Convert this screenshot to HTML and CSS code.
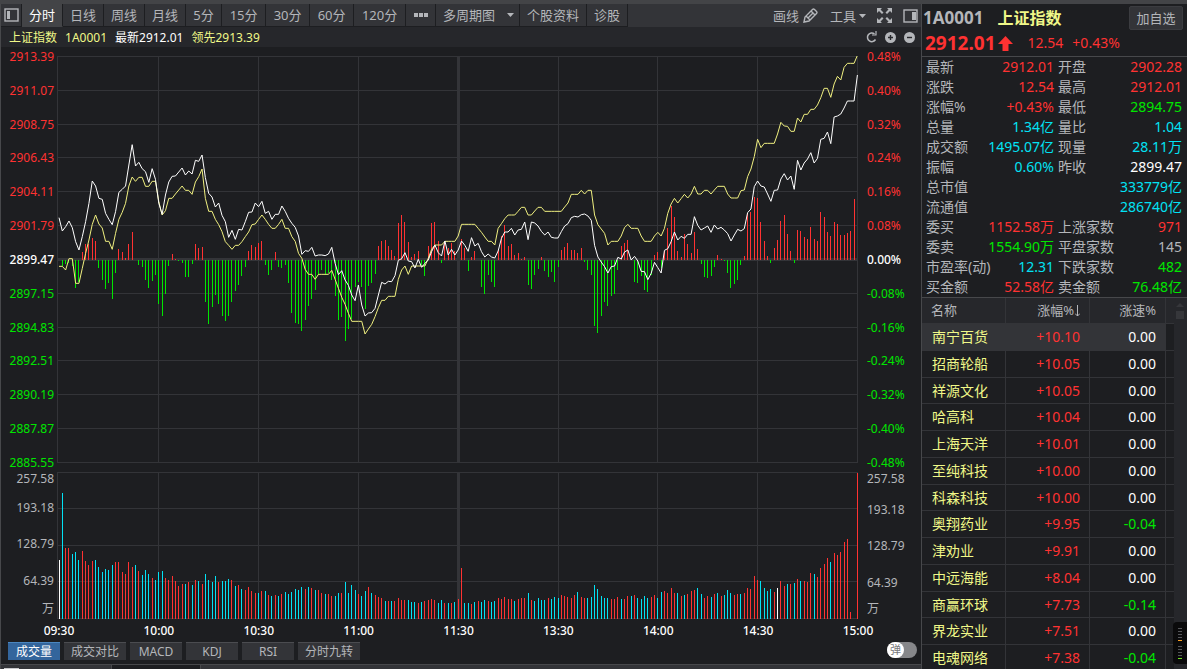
FILE: index.html
```html
<!DOCTYPE html>
<html lang="zh-CN">
<head>
<meta charset="utf-8">
<title>上证指数 1A0001</title>
<link rel="stylesheet" href="styles.css">
</head>
<body>
<div class="app">
  <div class="top-strip"></div>
  <main class="left">
    <nav class="toolbar">
      <button class="tab icon-tab" aria-label="侧栏"><svg width="15" height="14" viewBox="0 0 15 14"><rect x="1" y="1" width="13" height="12" fill="none" stroke="#b4b6ba" stroke-width="1.4"/><rect x="3" y="3" width="3" height="8" fill="#b4b6ba"/></svg></button>
      <button class="tab active">分时</button>
      <button class="tab">日线</button>
      <button class="tab">周线</button>
      <button class="tab">月线</button>
      <button class="tab w-s">5分</button>
      <button class="tab w-m">15分</button>
      <button class="tab w-m">30分</button>
      <button class="tab w-m">60分</button>
      <button class="tab w-l">120分</button>
      <button class="tab dots" aria-label="更多"><svg width="14" height="4" viewBox="0 0 14 4"><path d="M0 0h4v4H0zM5 0h4v4H5zM10 0h4v4h-4z" fill="#b4b6ba"/></svg></button>
      <span class="tab drop"><select aria-label="多周期图"><option>多周期图</option></select><svg width="7" height="4" viewBox="0 0 7 4"><path d="M0 0h7L3.500 4z" fill="#b4b6ba"/></svg></span>
      <button class="tab">个股资料</button>
      <button class="tab">诊股</button>
      <div class="tools">
        <button class="tool">画线<svg width="15" height="15" viewBox="0 0 15 15" fill="none" stroke="#b4b6ba" stroke-width="1.4"><path d="M1 14l1-5 7.500-7.500q1-1 2 0l2 2q1 1 0 2L6 13z"/><path d="M4.500 10.500l6-6M3 8l4 4M8 3l4 4"/></svg></button>
        <span class="tool menu"><select aria-label="工具"><option>工具</option></select><svg width="7" height="4" viewBox="0 0 7 4"><path d="M0 0h7L3.500 4z" fill="#b4b6ba"/></svg></span>
        <button class="tool" aria-label="全屏"><svg width="15" height="15" viewBox="0 0 15 15"><path d="M0 0h5L3.500 1.500 6.500 4.500 5 6 2 3 0 5zM15 0v5L13 3 10 6 8.500 4.500l3-3L10 0zM0 15v-5l2 2 3-3 1.500 1.500-3 3L5 15zM15 15h-5l1.500-1.500-3-3L10 9l3 3 2-2z" fill="#b4b6ba"/></svg></button>
        <button class="tool" aria-label="右侧栏"><svg width="15" height="14" viewBox="0 0 15 14"><rect x="1" y="1" width="13" height="12" fill="none" stroke="#b4b6ba" stroke-width="1.4"/><rect x="9" y="3" width="4" height="8" fill="#b4b6ba"/></svg></button>
      </div>
    </nav>

    <div class="info">
      <span class="yellow">上证指数</span><span class="yellow">1A0001</span><span class="white">最新2912.01</span><span class="yellow">领先2913.39</span>
      <div class="info-icons">
        <button aria-label="刷新"><svg width="11" height="12" viewBox="0 0 11 12"><path d="M8.500 3A4.300 4.300 0 1 0 9.500 8.500" fill="none" stroke="#b4b6ba" stroke-width="1.500"/><path d="M6 4h4V0" fill="none" stroke="#b4b6ba" stroke-width="1.200"/></svg></button>
        <button aria-label="放大"><svg width="11" height="11" viewBox="0 0 11 11"><circle cx="5.500" cy="5.500" r="5.500" fill="#b4b6ba"/><path d="M3 5.500h5M5.500 3v5" stroke="#26272b" stroke-width="1.400"/></svg></button>
        <button aria-label="缩小"><svg width="11" height="11" viewBox="0 0 11 11"><circle cx="5.500" cy="5.500" r="5.500" fill="#b4b6ba"/><path d="M3 5.500h5" stroke="#26272b" stroke-width="1.400"/></svg></button>
      </div>
    </div>

    <section class="charts">
      <div class="plot-row price">
        <div class="axis axis-left">
          <span class="red">2913.39</span><span class="red">2911.07</span><span class="red">2908.75</span><span class="red">2906.43</span><span class="red">2904.11</span><span class="red">2901.79</span><span class="zero">2899.47</span><span class="green">2897.15</span><span class="green">2894.83</span><span class="green">2892.51</span><span class="green">2890.19</span><span class="green">2887.87</span><span class="green">2885.55</span>
        </div>
        <div class="plot"><svg id="price" viewBox="0 0 2403 1221" preserveAspectRatio="none" role="img" aria-label="分时走势"></svg></div>
        <div class="axis axis-right">
          <span class="red">0.48%</span><span class="red">0.40%</span><span class="red">0.32%</span><span class="red">0.24%</span><span class="red">0.16%</span><span class="red">0.08%</span><span class="zero">0.00%</span><span class="green">-0.08%</span><span class="green">-0.16%</span><span class="green">-0.24%</span><span class="green">-0.32%</span><span class="green">-0.40%</span><span class="green">-0.48%</span>
        </div>
      </div>
      <div class="plot-row volume">
        <div class="vol-axis axis-left"><span>257.58</span><span>193.18</span><span>128.79</span><span>64.39</span><span>万</span></div>
        <div class="plot"><svg id="volume" viewBox="0 0 2403 441" preserveAspectRatio="none" role="img" aria-label="成交量"></svg></div>
        <div class="vol-axis axis-right"><span>257.58</span><span>193.18</span><span>128.79</span><span>64.39</span><span>万</span></div>
      </div>
      <div class="times"><span>09:30</span><span>10:00</span><span>10:30</span><span>11:00</span><span>11:30</span><span>13:30</span><span>14:00</span><span>14:30</span><span>15:00</span></div>
    </section>

    <div class="indicators">
      <button class="ind on">成交量</button><button class="ind wide">成交对比</button><button class="ind">MACD</button><button class="ind">KDJ</button><button class="ind">RSI</button><button class="ind wide">分时九转</button>
      <label class="switch"><input type="checkbox"><span class="knob">弹</span></label>
    </div>
    <div class="bottom-strip"><i class="stub"></i><i class="slot"></i></div>
  </main>

  <aside class="right">
    <header class="quote">
      <div class="name-row"><span class="code">1A0001</span><h1>上证指数</h1><button class="add">加自选</button></div>
      <div class="last-row"><strong>2912.01</strong><svg width="15" height="15" viewBox="0 0 15 15"><path d="M7.500 0L15 8h-4.500v7h-6V8H0z" fill="#ff3232"/></svg><span class="chg">12.54</span><span>+0.43%</span></div>
    </header>
    <dl class="stats">
      <dt>最新</dt><dd class="red">2912.01</dd><dt class="second">开盘</dt><dd class="red">2902.28</dd>
      <dt>涨跌</dt><dd class="red">12.54</dd><dt class="second">最高</dt><dd class="red">2912.01</dd>
      <dt>涨幅%</dt><dd class="red">+0.43%</dd><dt class="second">最低</dt><dd class="green">2894.75</dd>
      <dt>总量</dt><dd class="cyan">1.34亿</dd><dt class="second">量比</dt><dd class="cyan">1.04</dd>
      <dt>成交额</dt><dd class="cyan">1495.07亿</dd><dt class="second">现量</dt><dd class="cyan">28.11万</dd>
      <dt>振幅</dt><dd class="cyan">0.60%</dd><dt class="second">昨收</dt><dd class="white">2899.47</dd>
      <dt>总市值</dt><dd class="cyan span">333779亿</dd>
      <dt>流通值</dt><dd class="cyan span">286740亿</dd>
      <dt>委买</dt><dd class="red">1152.58万</dd><dt class="second">上涨家数</dt><dd class="red">971</dd>
      <dt>委卖</dt><dd class="green">1554.90万</dd><dt class="second">平盘家数</dt><dd>145</dd>
      <dt>市盈率(动)</dt><dd class="cyan">12.31</dd><dt class="second">下跌家数</dt><dd class="green">482</dd>
      <dt>买金额</dt><dd class="red">52.58亿</dd><dt class="second">卖金额</dt><dd class="green">76.48亿</dd>
    </dl>
    <div class="list">
      <table>
        <colgroup><col class="c-name"><col class="c-pct"><col class="c-speed"><col></colgroup>
        <thead><tr><th>名称</th><th>涨幅%<svg class="sort" width="5" height="12" viewBox="0 0 5 12"><path d="M2.500 0v11M0 8.500l2.500 2.500L5 8.500" fill="none" stroke="#b4b6ba"/></svg></th><th>涨速%</th><th></th></tr></thead>
        <tbody>
          <tr class="selected"><td>南宁百货</td><td>+10.10</td><td>0.00</td><td></td></tr>
          <tr><td>招商轮船</td><td>+10.05</td><td>0.00</td><td></td></tr>
          <tr><td>祥源文化</td><td>+10.05</td><td>0.00</td><td></td></tr>
          <tr><td>哈高科</td><td>+10.04</td><td>0.00</td><td></td></tr>
          <tr><td>上海天洋</td><td>+10.01</td><td>0.00</td><td></td></tr>
          <tr><td>至纯科技</td><td>+10.00</td><td>0.00</td><td></td></tr>
          <tr><td>科森科技</td><td>+10.00</td><td>0.00</td><td></td></tr>
          <tr><td>奥翔药业</td><td>+9.95</td><td class="green">-0.04</td><td></td></tr>
          <tr><td>津劝业</td><td>+9.91</td><td>0.00</td><td></td></tr>
          <tr><td>中远海能</td><td>+8.04</td><td>0.00</td><td></td></tr>
          <tr><td>商赢环球</td><td>+7.73</td><td class="green">-0.14</td><td></td></tr>
          <tr><td>界龙实业</td><td>+7.51</td><td>0.00</td><td></td></tr>
          <tr><td>电魂网络</td><td>+7.38</td><td class="green">-0.04</td><td></td></tr>
        </tbody>
      </table>
      <div class="scroll"><svg width="8" height="4" viewBox="0 0 8 4"><path d="M4 0l4 4H0z" fill="#36373b"/></svg><i class="thumb"></i></div>
      <div class="meter"><svg width="14" height="42" viewBox="0 0 14 42"><path d="M5 6.500h4M5 9.500h4M5 12.500h4M5 15.500h4M5 24.500h4M5 27.500h4M5 30.500h4M5 33.500h4" stroke="#55565a"/><path d="M5 18.500h4" stroke="#ffa020"/><path d="M5 36.500h4" stroke="#70e020"/></svg></div>
    </div>
  </aside>
</div>
<script src="chart.js"></script>
</body>
</html>
```
FILE: styles.css
```css
* { box-sizing: border-box; }
body {
  margin: 0;
  background: #1d1e21;
  color: #b4b6ba;
  font: 14px/20px "Noto Sans", "Noto Sans CJK SC", sans-serif;
}
button, select {
  margin: 0;
  padding: 0;
  border: 0;
  background: none;
  color: inherit;
  font: inherit;
}
select { appearance: none; }
svg { display: block; flex: none; }

.red { color: #ff3232; }
.green { color: #00e600; }
.cyan { color: #02e2f4; }
.white { color: #fff; }
.yellow { color: #f0f888; }

.app {
  display: grid;
  grid-template-columns: 1fr 266px;
  grid-template-rows: 4px 1fr;
  height: 100vh;
  overflow: hidden;
}
.top-strip { grid-column: 1 / -1; background: #434447; }

.left {
  display: flex;
  flex-direction: column;
  min-width: 0;
  min-height: 0;
  border-left: 1px solid #47484b;
}

.toolbar {
  display: flex;
  height: 23px;
  background: #333438;
  font-size: 13px;
  white-space: nowrap;
}
.tab {
  padding: 0 7px;
  border-right: 1px solid #1d1e21;
  border-bottom: 1px solid #1d1e21;
  line-height: 21px;
}
.tab.active { background: #434447; border-bottom-color: #434447; color: #fff; }
.icon-tab { padding: 0 2px 0 3px; }
.w-s { width: 36px; }
.w-m { width: 44px; }
.w-l { width: 52px; }
.dots { width: 30px; padding: 0 8px; }
.drop { display: flex; align-items: center; gap: 12px; padding: 0 5px 0 7px; }
.drop select { width: 52px; }
.tools { display: flex; gap: 11px; margin-left: auto; padding-right: 3px; }
.tool { display: flex; align-items: center; gap: 4px; }
.tool:first-child { margin-right: 1px; }
.menu { gap: 3px; }
.tool select { width: 26px; }

.info {
  display: flex;
  gap: 8px;
  height: 20px;
  padding: 0 6px 0 8px;
  background: #26272b;
  font-size: 12px;
  line-height: 22px;
}
.info-icons { display: flex; align-items: center; gap: 8px; margin-left: auto; }

.charts {
  display: flex;
  flex: 1;
  flex-direction: column;
  min-height: 0;
  padding-top: 9px;
  font-size: 12px;
}
.plot-row {
  display: grid;
  grid-template-columns: 56px 1fr 63px;
  grid-template-rows: 100%;
  min-height: 0;
}
.price { flex: 407 1 0; margin-bottom: 9px; }
.volume { flex: 147 1 0; }
.plot { min-width: 0; min-height: 0; }
.plot svg { width: 100%; height: 100%; }
.axis {
  display: flex;
  flex-direction: column;
  justify-content: space-between;
  margin: -6px 0 -7px;
  line-height: 14px;
}
.axis-left { padding-right: 3px; text-align: right; }
.axis-right { padding-left: 9px; }
.zero { color: #fff; font-weight: 500; }
.vol-axis {
  display: grid;
  grid-template-rows: 29fr 36fr 37fr 28fr 17fr;
  line-height: 14px;
}
.vol-axis.axis-right { grid-template-rows: 31fr 36fr 37fr 26fr 17fr; }
.times {
  display: flex;
  justify-content: space-between;
  height: 23px;
  margin: 0 43px 0 38px;
  color: #fff;
  font-weight: 500;
  line-height: 24px;
}
.times span { width: 40px; text-align: center; }

.plot line, .plot polyline { fill: none; stroke-width: 1px; vector-effect: non-scaling-stroke; }
.plot line { shape-rendering: crispEdges; }
.grid { stroke: #333438; }
.plot .thick { stroke-width: 3px; }
.up { stroke: #ff3232; }
.down { stroke: #00e600; }
.fall { stroke: #02e2f4; }
.flat, .index { stroke: #fff; }
.lead { stroke: #f0f080; }

.indicators {
  display: flex;
  gap: 4px;
  height: 18px;
  margin-bottom: 4px;
  padding: 0 4px 0 7px;
  font-size: 12px;
}
.ind {
  width: 52px;
  border-top: 1px solid #4b4c50;
  background: #333438;
  line-height: 17px;
}
.ind.wide { width: 62px; }
.ind.on { border-color: #4a86c0; background: #33659c; color: #fff; }
.switch {
  width: 30px;
  height: 16px;
  margin-left: auto;
  border-radius: 8px;
  background: #86878a;
}
.switch input { position: absolute; opacity: 0; pointer-events: none; }
.knob {
  display: block;
  width: 17px;
  height: 16px;
  border-radius: 8px;
  background: #fff;
  color: #77787b;
  font-size: 11px;
  line-height: 15px;
  text-align: center;
}
.bottom-strip {
  display: flex;
  height: 5px;
  border-top: 1px solid #47484b;
  background: #333438;
}
.stub { width: 15px; height: 1px; margin: 3px 92px 0 3px; background: #c8c9cc; }
.slot { width: 90px; border: 1px solid #47484b; border-width: 0 1px; background: #1d1e21; }

.right {
  display: flex;
  flex-direction: column;
  min-height: 0;
  border-left: 1px solid #47484b;
}
.quote { height: 53px; padding: 2px 4px 0 1px; border-bottom: 1px solid #47484b; }
.name-row { display: flex; align-items: center; height: 24px; }
.code { margin-right: 14px; font-size: 17px; font-weight: 700; }
h1 { margin: 0; color: #f0f888; font-size: 16px; line-height: 20px; }
.add {
  width: 54px;
  height: 24px;
  margin-left: auto;
  border: 1px solid #3b3c40;
  border-radius: 2px;
  background: #333438;
  font-size: 13px;
}
.last-row { display: flex; align-items: center; padding: 3px 0 0 2px; color: #ff3232; }
.last-row strong { margin-right: 2px; font-size: 19px; }
.chg { margin: 0 9px 0 15px; }

.stats {
  display: grid;
  grid-template-columns: 66px 62px 60px 1fr;
  grid-auto-rows: 20px;
  margin: 0;
  padding: 0 5px 0 4px;
  white-space: nowrap;
}
.stats dd { display: flex; justify-content: flex-end; margin: 0; }
.stats .second { padding-left: 4px; }
.stats .span { grid-column: 2 / -1; }

.list {
  position: relative;
  display: flex;
  flex: 1;
  min-height: 0;
  overflow: hidden;
  border-top: 1px solid #47484b;
}
table { flex: 1; border-collapse: separate; border-spacing: 0; table-layout: fixed; align-self: flex-start; }
.c-name, .c-pct { width: 84px; }
.c-speed { width: 76px; }
th {
  height: 26px;
  padding: 0 9px 2px;
  border-right: 1px solid #333438;
  border-bottom: 1px solid #333438;
  background: #26272b;
  font-size: 13px;
  font-weight: 400;
  text-align: right;
}
.sort { display: inline-block; margin-left: 1px; vertical-align: -2px; }
td {
  height: 27px;
  padding: 0 9px;
  border-right: 1px solid #333438;
  border-bottom: 1px solid #333438;
  color: #fff;
  text-align: right;
}
tr:nth-child(4n+3) td { height: 26px; }
td:first-child { padding-left: 10px; color: #f0f888; text-align: left; }
th:first-child { text-align: left; }
td:nth-child(2) { color: #ff3232; }
td.green { color: #00e600; }
th:last-child, td:last-child { padding: 0; border-right: 0; }
.selected td:not(:last-child) { background: #333438; }
.scroll {
  display: flex;
  flex-direction: column;
  gap: 4px;
  width: 13px;
  padding: 5px 0 0 2px;
  background: #26272b;
}
.thumb { width: 8px; height: 8px; background: #36373b; }
.meter {
  position: absolute;
  right: 0;
  bottom: 5px;
  border-radius: 4px 0 0 4px;
  background: #0a0a0b;
}
```
FILE: chart.js
```js
// One entry per trading minute, as an offset from the previous close.
const index = [127,87,100,117,97,55,30,70,115,170,237,222,185,182,140,122,106,145,203,212,222,285,346,282,293,274,265,233,274,242,
170,137,195,234,251,252,264,276,255,267,258,299,296,315,247,200,189,159,171,134,115,68,89,62,92,90,115,143,144,171,
160,176,140,146,122,137,137,162,146,125,110,98,72,17,28,26,38,12,15,15,13,18,38,-10,-44,-32,-60,-76,-105,-122,
-75,-135,-168,-159,-158,-145,-105,-67,-72,-64,-65,-47,-1,4,22,-3,-5,-24,2,-22,-10,0,25,45,22,12,57,15,32,15,
30,57,44,26,67,42,50,25,9,18,9,6,27,65,84,84,95,75,90,92,114,61,114,111,102,86,75,84,68,66,
66,85,102,109,127,131,129,136,138,132,119,44,9,-6,-20,-39,-20,-18,8,3,24,30,0,11,-3,-34,-35,-59,-40,-7,
-23,-39,29,34,55,84,60,71,65,77,77,130,104,90,96,102,83,105,93,98,90,79,57,75,92,87,94,142,153,220,
237,222,219,198,176,209,210,243,259,240,252,212,299,270,291,303,322,291,305,362,365,384,349,429,432,438,456,477,477,477,555];

const lead = [-19,-19,-30,4,4,-70,-70,-25,20,60,107,135,108,96,56,56,32,80,122,143,170,222,249,236,248,248,221,221,236,236,
175,135,148,185,185,198,210,222,209,209,197,234,250,273,185,146,146,122,106,85,55,44,32,44,44,55,70,84,106,108,
122,135,122,107,95,95,107,122,95,95,70,56,20,5,-28,-43,-43,-58,-43,-43,-43,-43,-31,-58,-85,-112,-133,-160,-184,-184,
-184,-184,-222,-207,-193,-170,-143,-121,-121,-109,-109,-109,-58,-30,-18,-43,-18,-18,-18,-18,-18,5,32,45,45,45,56,56,56,56,
72,107,107,107,107,107,95,83,69,56,56,45,95,109,124,135,135,135,146,158,158,135,135,147,158,158,146,146,146,146,
146,146,159,171,197,197,197,209,198,209,209,135,106,93,80,45,56,56,56,72,97,107,95,95,95,72,56,56,56,72,
83,72,95,140,168,185,171,184,197,186,198,221,198,198,209,209,198,210,221,221,221,198,186,186,186,208,210,250,273,310,
362,337,350,350,350,350,378,413,402,401,386,386,426,414,437,437,452,452,465,487,515,515,488,528,551,540,578,590,590,590,614];

const momentum = [0,-18,-12,-8,-18,-83,-65,24,48,48,66,57,-24,-60,-86,-69,-116,-38,33,24,6,48,84,0,-15,-21,-60,-83,-63,-45,
-132,-167,-101,-18,18,3,-2,-9,-51,-51,-11,48,36,39,-125,-191,-140,-105,-132,-167,-182,-167,-125,-92,-75,-48,-21,27,45,39,
51,57,-15,-45,-30,24,-21,-24,-15,-69,-159,-189,-192,-213,-180,-138,-117,-90,-45,-30,-45,-39,-60,-108,-180,-171,-243,-207,-177,-81,
-66,-81,-147,-78,-69,-42,42,57,60,42,30,12,111,135,114,54,9,18,27,-15,-48,42,111,114,57,-9,54,35,51,27,
0,62,36,-33,9,27,0,-81,-102,-45,-66,-81,30,72,105,42,48,15,21,3,9,-75,-87,-45,-27,9,-33,-51,-36,-66,
-21,30,39,51,30,30,21,36,-6,-30,-45,-198,-219,-168,-126,-138,-108,-102,-30,42,51,60,0,-66,-69,-48,-90,-96,-45,15,
24,-24,27,96,162,129,27,9,78,48,21,84,33,-11,-51,-54,-48,-21,15,3,-3,-39,-84,-72,-60,-15,12,141,144,189,
186,114,57,12,-9,36,60,117,135,78,27,-9,90,87,69,63,99,63,57,144,129,84,72,114,108,75,75,81,87,183];

// r: rising minute, c: falling minute, w: unchanged.
const volume = `w177 c378 r213 r213 c195 c201 c177 r204 r174 r162 r174 c177 c156 c141 c150 c147 c162 r171 r171 r141
r135 r171 r156 c162 r144 c132 c147 c135 r123 c117 c141 c144 r123 r117 r129 r114 r99 r105 c105 r111
c102 r117 c114 r105 c135 c117 c111 c129 r111 c114 c114 c120 r117 c99 r102 c90 r87 r96 r84 r78
c78 r84 c84 r72 c69 r72 c69 r75 c81 c75 c81 c90 c87 c96 r90 c96 r93 c87 r87 r78
c75 r75 r69 c69 c78 r78 c111 c78 c102 c87 r75 c69 c84 r96 c78 r72 r66 r63 c54 r54
c54 r54 r63 r57 r57 c57 c51 c51 r48 c51 r54 r57 r60 r57 c48 c57 r48 c48 r48 c51
r60 r153 c48 c48 r45 c51 r54 c51 c57 r54 c51 c54 r63 r60 r66 r60 r60 c54 r60 r63
r63 c78 r57 c54 c63 c57 c57 r63 c60 c66 c63 r72 r69 r66 r63 r72 c81 r66 r63 c63
c66 c102 c90 c69 c63 c63 r60 r60 r66 c60 r60 r69 c69 r72 c63 c60 c69 c63 r66 r72
c63 c81 r84 r78 r93 r78 c78 r69 c72 r75 r84 r87 c93 c75 r63 r69 c66 r75 c78 r69
c72 c87 c78 r72 r75 c75 r78 r93 r90 r129 r117 c114 c93 c84 c90 r81 w93 r114 r99 c105
r105 c108 r120 c114 r114 r111 r138 c135 r126 r153 r165 r183 c171 r198 r192 r201 r231 r240 r21 r0 r439`.split(/\s+/);

const x = (minute) => 6 + minute * 9.98;

function add(svg, tag, attrs) {
  const node = document.createElementNS("http://www.w3.org/2000/svg", tag);
  for (const key in attrs) node.setAttribute(key, attrs[key]);
  svg.appendChild(node);
}

function line(svg, x1, y1, x2, y2, cls) {
  add(svg, "line", { x1, y1, x2, y2, class: cls });
}

function drawGrid(svg, rows, step, bottom) {
  for (let r = 0; r <= rows; r++) {
    const thick = rows === 12 && r === 6;
    line(svg, 0, 1.4 + r * step, 2403, 1.4 + r * step, thick ? "grid thick" : "grid");
  }
  for (let c = 0; c <= 8; c++) {
    const gx = c === 0 ? 1.5 : x(c * 30);
    line(svg, gx, 0, gx, bottom, c === 4 ? "grid thick" : "grid");
  }
}

const price = document.getElementById("price");
const base = 612;
drawGrid(price, 12, 101.45, 1221);
momentum.forEach((v, i) => {
  if (v) line(price, x(i), base, x(i), base - v, v > 0 ? "up" : "down");
});
for (const [series, cls] of [[lead, "lead"], [index, "index"]]) {
  add(price, "polyline", { points: series.map((v, i) => `${x(i)},${base - v}`).join(" "), class: cls });
}

const vol = document.getElementById("volume");
const kinds = { r: "up", c: "fall", w: "flat" };
drawGrid(vol, 4, 109.5, 441);
volume.forEach((entry, i) => {
  const height = Number(entry.slice(1));
  if (height) line(vol, x(i), 441, x(i), 441 - height, kinds[entry[0]]);
});
```
